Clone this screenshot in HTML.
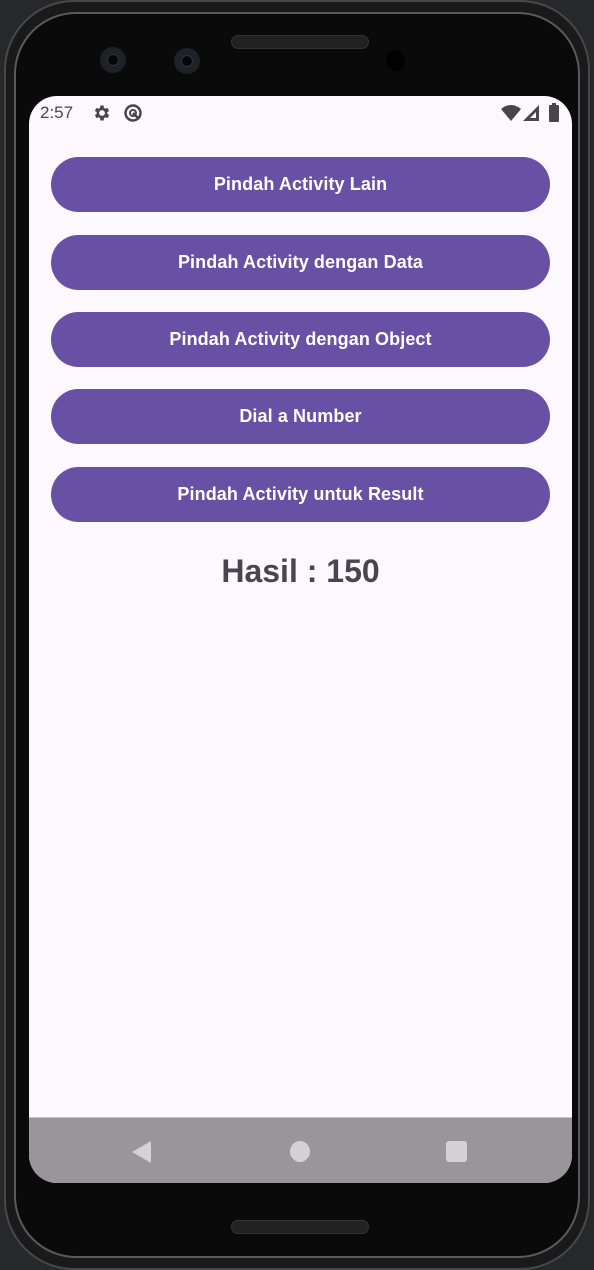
<!DOCTYPE html>
<html><head><meta charset="utf-8"><style>
*{margin:0;padding:0;box-sizing:border-box}
html,body{width:594px;height:1270px;overflow:hidden;background:#27282b;font-family:"Liberation Sans",sans-serif}
.frame{position:absolute;left:4px;top:0;width:586px;height:1270px;border-radius:70px;background:#1a1a1b;border:2px solid #48484a}
.inner{position:absolute;left:14px;top:12px;width:566px;height:1246px;border-radius:62px;background:#0a0a0b;border:2px solid #5a5a5c}
.screen{position:absolute;left:29px;top:96px;width:543px;height:1087px;background:#fdf7fe;border-radius:28px;overflow:hidden}
.speaker{position:absolute;left:231px;width:138px;height:14px;border-radius:7px;background:#222;border:1px solid #333}
.cam{position:absolute;width:26px;height:26px;border-radius:50%;background:#1c2228}
.cam:after{content:"";position:absolute;left:8px;top:8px;width:10px;height:10px;border-radius:50%;background:#05070a;box-shadow:0 0 0 1px #333}
.status{position:absolute;top:0;left:0;width:100%;height:34px;color:#49454f;font-size:17px}
.btn{position:absolute;left:22px;width:499px;height:55px;border-radius:28px;background:#6850a4;color:#fff;font-size:18px;font-weight:bold;display:flex;align-items:center;justify-content:center;letter-spacing:0.1px}
.hasil{position:absolute;left:0;width:100%;top:457px;text-align:center;font-size:32px;font-weight:bold;color:#49454f}
.nav{position:absolute;left:0;top:1021px;width:100%;height:66px;background:#999598;border-top:1px solid #c9c4c9}
</style></head><body>
<div class="frame"></div>
<div class="inner"></div>
<div class="speaker" style="top:35px"></div>
<div class="speaker" style="top:1220px"></div>
<div class="cam" style="left:100px;top:47px"></div>
<div class="cam" style="left:174px;top:48px"></div>
<div style="position:absolute;left:386px;top:50px;width:19px;height:21px;border-radius:50%;background:#020202"></div>
<div class="screen">
 <div class="status">
  <span style="position:absolute;left:11px;top:7px">2:57</span>
  <svg style="position:absolute;left:63px;top:7px" width="20" height="20" viewBox="0 0 24 24"><path fill="#49454f" d="M19.4 13a7.5 7.5 0 000-2l2.1-1.6-2-3.5-2.5 1a7 7 0 00-1.7-1L15 3h-4l-.4 2.9a7 7 0 00-1.7 1l-2.5-1-2 3.5L6.6 11a7.5 7.5 0 000 2l-2.1 1.6 2 3.5 2.5-1a7 7 0 001.7 1L11 21h4l.4-2.9a7 7 0 001.7-1l2.5 1 2-3.5zM13 15.5a3.5 3.5 0 110-7 3.5 3.5 0 010 7z" transform="translate(-1 0)"/></svg>
  <svg style="position:absolute;left:94px;top:7px" width="20" height="20" viewBox="0 0 20 20"><circle cx="10" cy="10" r="7.5" fill="none" stroke="#49454f" stroke-width="2.5"/><circle cx="10" cy="10" r="3" fill="none" stroke="#49454f" stroke-width="2"/><path d="M10 10l6 6" stroke="#49454f" stroke-width="2.5"/></svg>
  <svg style="position:absolute;left:472px;top:9px" width="20" height="16" viewBox="0 0 20 16"><path d="M0 4Q10-4 20 4L10 16z" fill="#49454f"/></svg>
  <svg style="position:absolute;left:494px;top:9px" width="16" height="16" viewBox="0 0 16 16"><path d="M16 0V16H0z" fill="#49454f"/><path d="M13 7V13H7z" fill="#fdf7fe"/></svg>
  <svg style="position:absolute;left:520px;top:7px" width="10" height="19" viewBox="0 0 10 19"><rect x="3" y="0" width="4" height="2" fill="#49454f"/><rect x="0" y="2" width="10" height="17" rx="1" fill="#49454f"/></svg>
 </div>
 <div class="btn" style="top:61px">Pindah Activity Lain</div>
 <div class="btn" style="top:139px">Pindah Activity dengan Data</div>
 <div class="btn" style="top:216px">Pindah Activity dengan Object</div>
 <div class="btn" style="top:293px">Dial a Number</div>
 <div class="btn" style="top:371px">Pindah Activity untuk Result</div>
 <div class="hasil">Hasil : 150</div>
 <div class="nav">
  <svg style="position:absolute;left:102px;top:22px" width="22" height="24" viewBox="0 0 22 24"><path d="M20 1V23L1 12z" fill="#d5d2d6"/></svg>
  <div style="position:absolute;left:261px;top:23px;width:20px;height:21px;border-radius:50%;background:#d5d2d6"></div>
  <div style="position:absolute;left:417px;top:23px;width:21px;height:21px;border-radius:3px;background:#d5d2d6"></div>
 </div>
</div>
</body></html>
